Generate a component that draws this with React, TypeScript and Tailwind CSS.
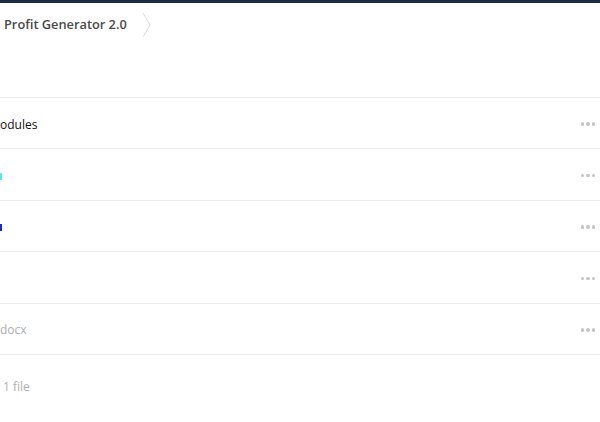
const ROWS = [
  { name: 'odules', color: 'text-[#111111]' },
  { name: '', color: 'text-[#5ee6f0]', stub: 'bg-[#5ee6f0]' },
  { name: '', color: 'text-[#1a2fa8]', stub: 'bg-[#1a2fa8]' },
  { name: '', color: 'text-[#111111]' },
  { name: 'docx', color: 'text-[#b0b0b0]' },
]

function Dots() {
  return (
    <div className="flex gap-[2px] mt-[2px]">
      <span className="w-[3.5px] h-[3.5px] rounded-full bg-[#c4c4c4]" />
      <span className="w-[3.5px] h-[3.5px] rounded-full bg-[#c4c4c4]" />
      <span className="w-[3.5px] h-[3.5px] rounded-full bg-[#c4c4c4]" />
    </div>
  )
}

export default function App() {
  return (
    <div className="w-[600px] h-[422px] bg-white overflow-hidden font-['Open_Sans',sans-serif]">
      <div className="h-[3px] bg-[#1b2a42]" />

      {/* breadcrumb */}
      <div className="h-[44px] flex items-center">
        <span className="pl-[4px] text-[12.8px] font-semibold text-[#4a4a4a]">Profit Generator 2.0</span>
        <svg width="10" height="26" viewBox="0 0 10 26" className="ml-[15px]">
          <polyline points="1,1 8,13 1,25" fill="none" stroke="#dcdcdc" strokeWidth="1" />
        </svg>
      </div>

      <div className="h-[50px]" />

      {ROWS.map((row, i) => (
        <div key={i} className="h-[51.4px] border-t border-[#ebebeb] flex items-center justify-between pr-[5px]">
          <div className={`flex items-center text-[12px] pt-[3px] ${row.color}`}>
            {row.stub ? <span className={`w-[2px] h-[7px] mt-[1px] ${row.stub}`} /> : row.name}
          </div>
          <Dots />
        </div>
      ))}

      <div className="border-t border-[#ebebeb] pt-[23px] pl-[3px] text-[12px] text-[#b0b0b0]">1 file</div>
    </div>
  )
}
